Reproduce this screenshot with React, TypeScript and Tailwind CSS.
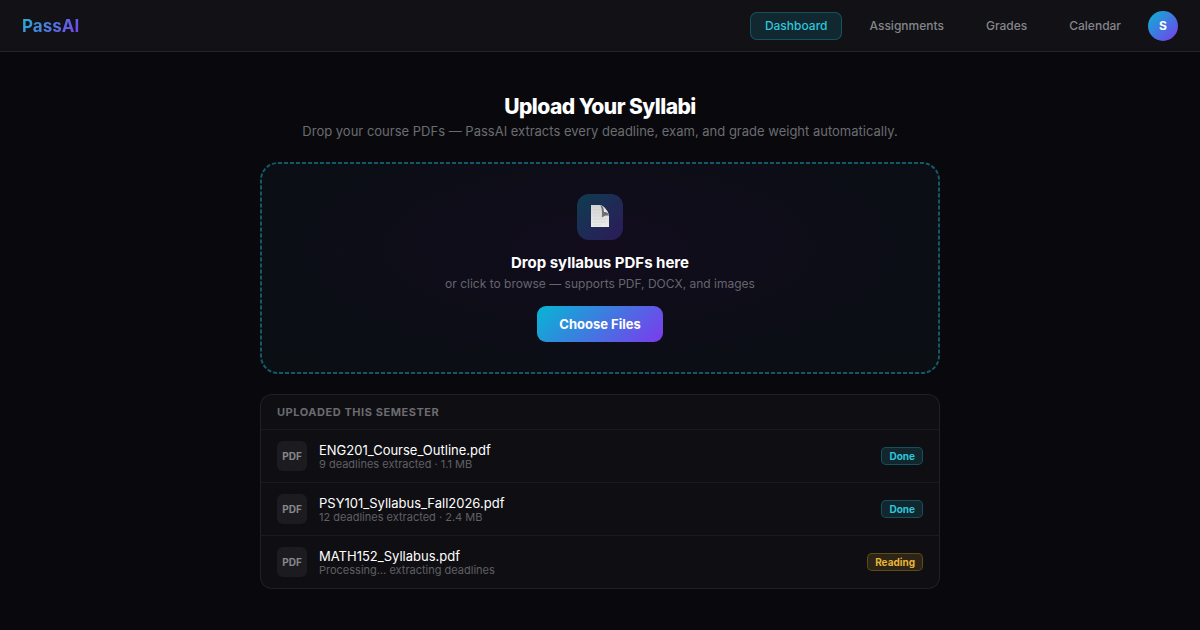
import type { JSX } from 'react';

type FileStatus = 'Done' | 'Reading';

interface IUploadedFile {
  name: string;
  detail: string;
  status: FileStatus;
}

const NAV_ITEMS: readonly string[] = ['Dashboard', 'Assignments', 'Grades', 'Calendar'];

const FILES: readonly IUploadedFile[] = [
  { name: 'ENG201_Course_Outline.pdf', detail: '9 deadlines extracted · 1.1 MB', status: 'Done' },
  { name: 'PSY101_Syllabus_Fall2026.pdf', detail: '12 deadlines extracted · 2.4 MB', status: 'Done' },
  { name: 'MATH152_Syllabus.pdf', detail: 'Processing… extracting deadlines', status: 'Reading' },
];

/** Literal class strings so Tailwind picks them up. */
const STATUS_CLASSES: Readonly<Record<FileStatus, string>> = {
  Done: 'border-[#22d3ee]/25 bg-[#22d3ee]/12 text-[#2cc6dd]',
  Reading: 'border-[#fbbf24]/25 bg-[#fbbf24]/12 text-[#e8b53a]',
};

function NavBar(): JSX.Element {
  return (
    <header className="flex h-13 items-center justify-between border-b border-white/8 bg-[#111116] px-[22px]">
      <a
        href="#home"
        className="bg-[linear-gradient(135deg,#22b8d4,#7c3aed)] bg-clip-text pt-0.5 text-[17px] font-bold text-transparent"
      >
        PassAI
      </a>
      <nav aria-label="Main" className="flex items-center gap-3">
        {NAV_ITEMS.map((item) => (
          <a
            key={item}
            href={`#${item.toLowerCase()}`}
            aria-current={item === 'Dashboard' ? 'page' : undefined}
            className={`flex h-7 items-center rounded-[7px] border px-3.5 text-xs font-medium ${
              item === 'Dashboard'
                ? 'border-[#22d3ee]/25 bg-[#22d3ee]/12 text-[#2cc6dd]'
                : 'border-transparent text-[#85858a]'
            }`}
          >
            {item}
          </a>
        ))}
        <button
          type="button"
          aria-label="S, account"
          className="flex size-[30px] items-center justify-center rounded-full bg-[linear-gradient(135deg,#06b6d4,#7c3aed)] text-xs font-bold text-white"
        >
          S
        </button>
      </nav>
    </header>
  );
}

/** Sheet of paper with a folded top-right corner. */
function PageIcon(): JSX.Element {
  return (
    <svg viewBox="0 0 20 24" className="h-6 w-5" aria-hidden="true">
      <defs>
        <linearGradient id="sheet" x1="0" y1="0" x2="0" y2="1">
          <stop offset="0" stopColor="#d2d2d3" />
          <stop offset="1" stopColor="#ececed" />
        </linearGradient>
        <linearGradient id="fold" x1="0" y1="1" x2="1" y2="0">
          <stop offset="0" stopColor="#77777a" />
          <stop offset="0.5" stopColor="#6a6a6d" />
          <stop offset="1" stopColor="#a4a4a6" />
        </linearGradient>
      </defs>
      <path d="M1 0h9.500c3.500 0.500 8.500 7.500 8.500 11V22H1z" fill="url(#sheet)" />
      <path d="M3 5h7M3 8h7M3 11h8M3 14h13M3 17h13M3 20h8" stroke="#cacacc" strokeWidth="0.5" />
      <path d="M10 0c1.800 2 2.300 6 1.800 12.500 2-1.800 4.400-2.300 7.200-2C18 7 14 1.500 10 0z" fill="url(#fold)" />
      <path d="M12.400 1.200c2.700 1.800 4.900 4.300 6 7.300-1.500-1-3-1.400-4.500-1.400.1-2-.5-4.200-1.500-5.900z" fill="#e6e6e7" />
    </svg>
  );
}

/** Dashed outline with shorter dashes than a CSS dashed border gives. */
function DashedOutline(): JSX.Element {
  return (
    <svg className="pointer-events-none absolute inset-0 size-full" aria-hidden="true">
      <rect
        x="1"
        y="1"
        rx="17"
        fill="none"
        stroke="#22d3ee"
        strokeOpacity="0.38"
        strokeWidth="2"
        strokeDasharray="4 2"
        className="h-[calc(100%-2px)] w-[calc(100%-2px)]"
      />
    </svg>
  );
}

function DropZone(): JSX.Element {
  return (
    <section
      aria-labelledby="drop-title"
      className="relative mt-[21px] flex flex-col items-center rounded-[18px] bg-[radial-gradient(ellipse_at_50%_40%,#120c1d_0%,#0b0e15_70%,#0a0f13_100%)] px-6 py-8 text-center"
    >
      <DashedOutline />
      <div className="flex size-[46px] items-center justify-center rounded-xl bg-[linear-gradient(135deg,#0f3c50,#2d1a5a)]">
        <PageIcon />
      </div>
      <h2 id="drop-title" className="mt-3 text-[15px] leading-[22px] font-bold text-white">
        Drop syllabus PDFs here
      </h2>
      <p className="text-xs leading-5 text-[#66656e]">or click to browse — supports PDF, DOCX, and images</p>
      <button
        type="button"
        className="mt-3 h-9 rounded-[9px] bg-[linear-gradient(135deg,#06b6d4,#7c3aed)] px-[22px] pt-0.5 text-[13px] font-bold text-white"
      >
        Choose Files
      </button>
    </section>
  );
}

function FileRow({ name, detail, status }: IUploadedFile): JSX.Element {
  return (
    <li className="flex items-center gap-3 border-t border-white/5 px-4 py-[11px]">
      <div className="flex size-[30px] shrink-0 items-center justify-center rounded-md bg-[#1c1c20] text-[10px] font-bold text-[#87878b]">
        PDF
      </div>
      <div className="min-w-0 flex-1">
        <p className="truncate text-[13px] leading-4 text-white">{name}</p>
        <p className="text-[11px] leading-3 text-[#5f5f64]">{detail}</p>
      </div>
      <span className={`rounded-[5px] border px-[7px] text-[10px] leading-4 font-bold ${STATUS_CLASSES[status]}`}>
        {status}
      </span>
    </li>
  );
}

function UploadedList(): JSX.Element {
  return (
    <section
      aria-labelledby="uploaded-title"
      className="mt-5 overflow-hidden rounded-xl border border-white/8 bg-[#0f0f13]"
    >
      <h2
        id="uploaded-title"
        className="px-4 py-2 text-[11px] leading-[18px] font-bold tracking-wider text-[#6b6b70] uppercase"
      >
        Uploaded this semester
      </h2>
      <ul>
        {FILES.map((file) => (
          <FileRow key={file.name} {...file} />
        ))}
      </ul>
    </section>
  );
}

export default function App(): JSX.Element {
  return (
    <div className="min-h-screen bg-[#09090d] font-['Inter',sans-serif]">
      <NavBar />
      <main className="mx-auto max-w-[728px] px-6 pt-10 pb-10">
        <div className="text-center">
          <h1 className="text-[21px] leading-[29px] font-extrabold tracking-tight text-white">Upload Your Syllabi</h1>
          <p className="text-[13px] leading-5 text-[#6c6c70]">
            Drop your course PDFs — PassAI extracts every deadline, exam, and grade weight automatically.
          </p>
        </div>
        <DropZone />
        <UploadedList />
      </main>
    </div>
  );
}
